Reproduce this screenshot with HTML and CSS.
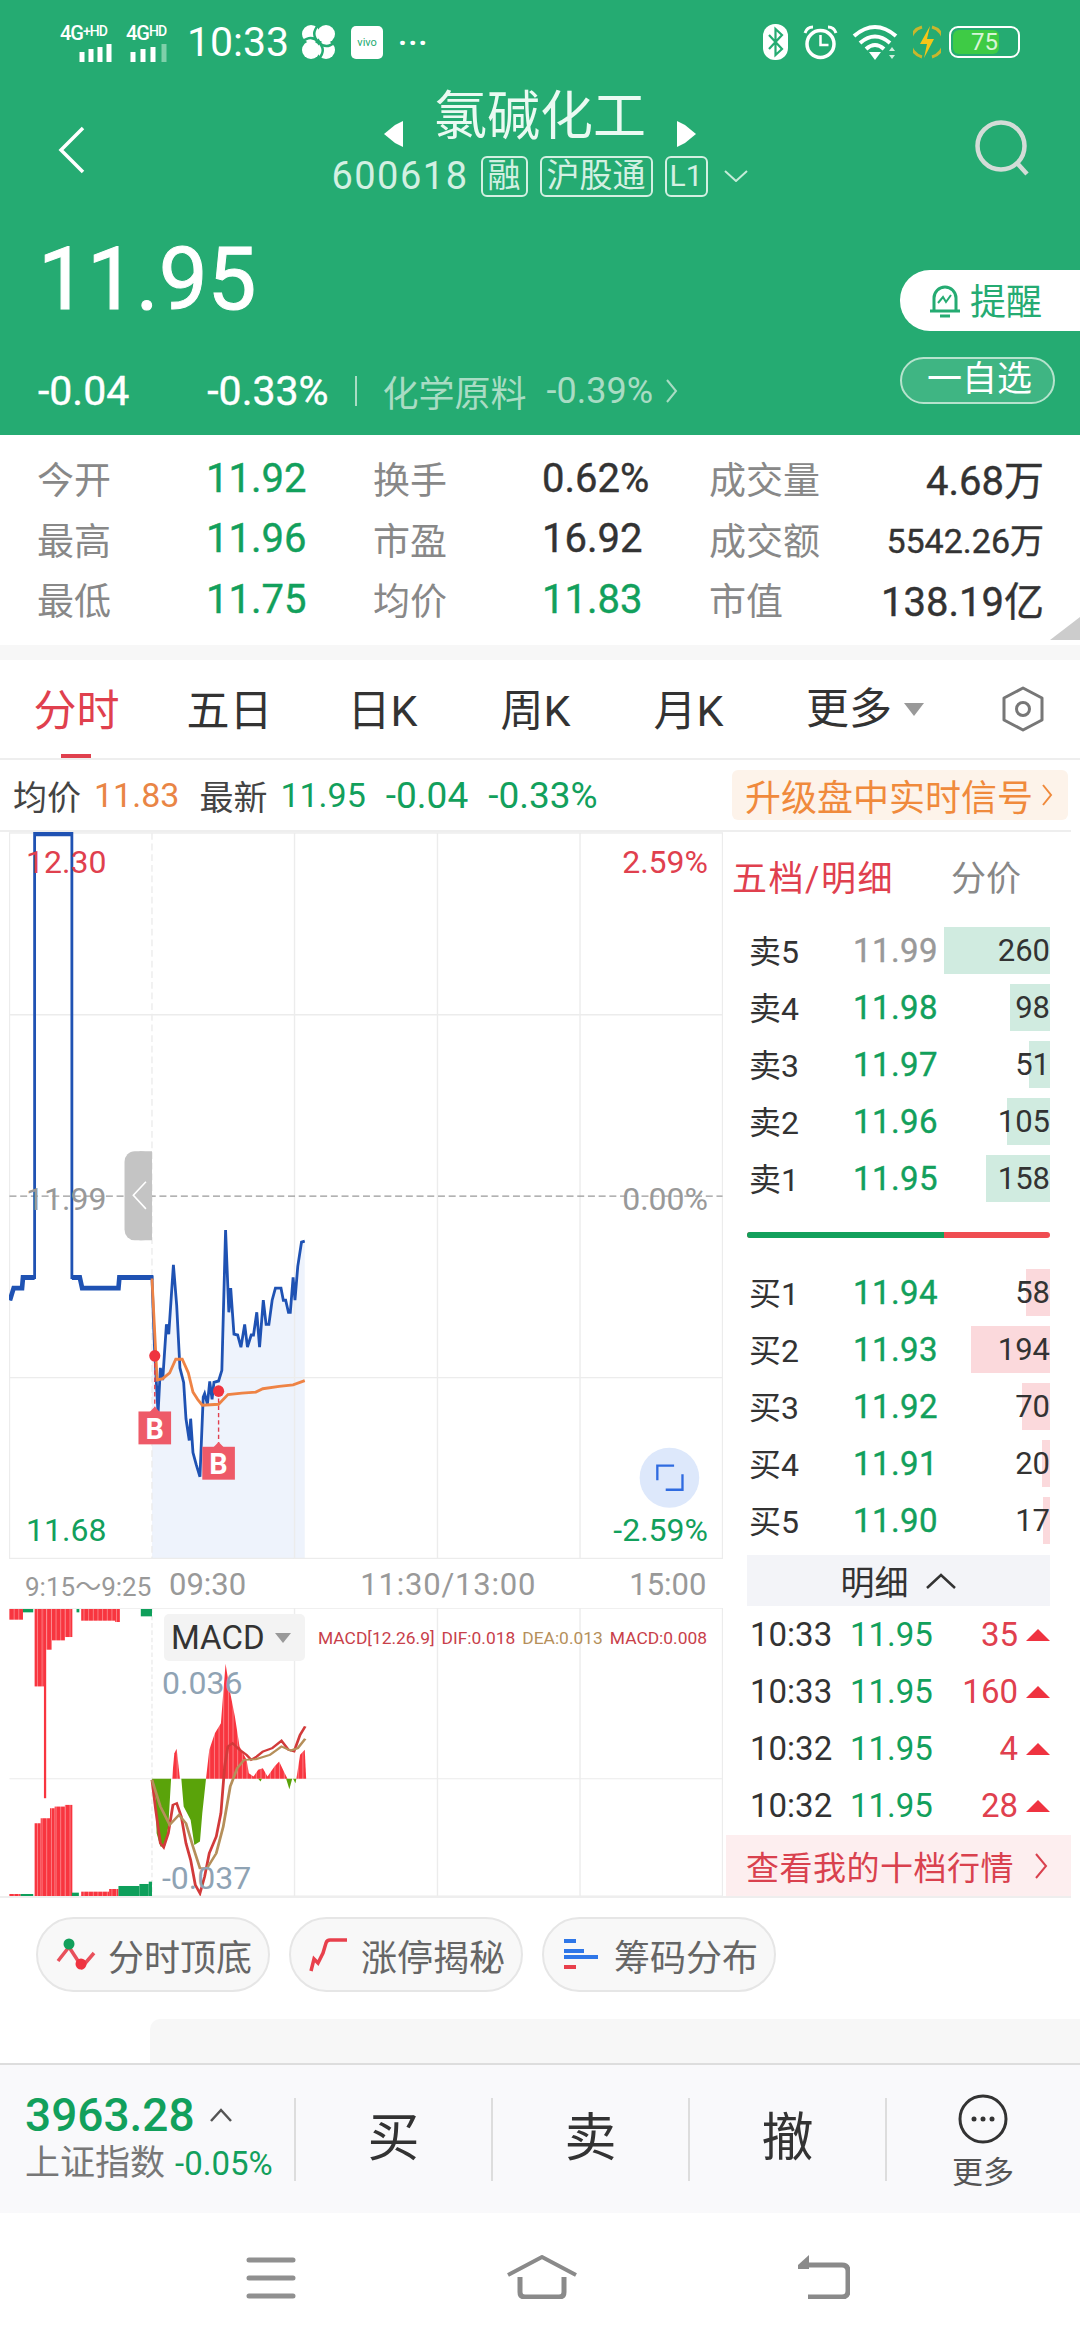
FILE: index.html
```html
<!DOCTYPE html>
<html lang="zh-CN">
<head>
    <meta charset="UTF-8">
    <meta name="viewport" content="width=device-width, initial-scale=1.0">
    <title>氯碱化工 600618</title>
    <link rel="stylesheet" href="styles.css">
</head>
<body>
    <div class="header">
        <div class="statusbar">
            <div class="net"><span>4G<sup>+</sup><sup>HD</sup></span>
                <svg width="42" height="18" viewBox="0 0 42 18"><path d="M9 8v10M18 5v13M27 3v15M36 0v18" stroke="#fff" stroke-width="5"/></svg>
            </div>
            <div class="net net2"><span>4G<sup>HD</sup></span>
                <svg width="44" height="18" viewBox="0 0 44 18"><path d="M5 8v10M15 5v13M25 3v15" stroke="#fff" stroke-width="5"/><path d="M36 0v18" stroke="#7fd0aa" stroke-width="5"/></svg>
            </div>
            <span class="clock">10:33</span>
            <svg class="fan" width="33" height="34" viewBox="0 0 33 34"><circle cx="9" cy="9" r="9" fill="#fff"/><circle cx="24" cy="9" r="9" fill="#fff"/><circle cx="9" cy="25" r="9" fill="#fff"/><circle cx="24" cy="25" r="9" fill="#fff"/><path d="M0 17Q9 9 16.500 17T33 17M16.500 0Q8 9 16.500 17T16.500 34" stroke="#25ab72" stroke-width="2.500" fill="none"/></svg>
            <span class="vivo">vivo</span>
            <span class="dots">···</span>
            <div class="status-right">
                <svg width="25" height="36" viewBox="0 0 25 36"><rect width="25" height="36" rx="12" fill="#fff"/><path d="M6 11l13 14-6.500 6V5l6.500 6L6 25" stroke="#25ab72" stroke-width="2.200" fill="none"/></svg>
                <svg class="ic-alarm" width="35" height="35" viewBox="0 0 35 35"><circle cx="17.500" cy="19" r="13.500" stroke="#fff" stroke-width="3.500" fill="none"/><path d="M17.500 10v10h8" stroke="#fff" stroke-width="2.500" fill="none"/><path d="M2 8Q4 2 10 2M33 8Q31 2 25 2" stroke="#fff" stroke-width="3" fill="none"/></svg>
                <svg class="ic-wifi" width="46" height="36" viewBox="0 0 46 36"><path d="M2 12Q23-6 44 12M8 19Q23 6 38 19M14 25Q23 17 32 25" stroke="#fff" stroke-width="4" fill="none"/><path d="M17 28h12l-6 8z" fill="#fff"/><path d="M40 23l3 4h-6zM40 35l3-4h-6z" fill="#cfeede"/></svg>
                <svg class="ic-bolt" width="28" height="36" viewBox="0 0 28 36"><path d="M9 3A15.500 15.500 0 0 0 9 33M19 3a15.500 15.500 0 0 1 0 30" stroke="#c9b62c" stroke-width="3" fill="none"/><path d="M17 2L7 20h7l-3 14 10-19h-7z" fill="#f5c518"/></svg>
                <div class="battery"><div class="battery-fill" style="width:73%"></div><span>75</span></div>
            </div>
        </div>

        <div class="nav">
            <svg class="back" width="27" height="48" viewBox="0 0 27 48"><path d="M25 2L3 24l22 22" stroke="#fff" stroke-width="3.500" fill="none"/></svg>
            <div class="nav-center">
                <div class="title-row">
                    <svg class="arrow" width="19" height="26" viewBox="0 0 19 26"><path d="M19 0v26L11 22 0 13 11 4z" fill="#fff"/></svg>
                    <span class="title">氯碱化工</span>
                    <svg class="arrow" width="19" height="26" viewBox="0 0 19 26"><path d="M0 0v26l8-4 11-9L8 4z" fill="#fff"/></svg>
                </div>
                <div class="sub-row">
                    <span class="code">600618</span>
                    <span class="tag">融</span>
                    <span class="tag">沪股通</span>
                    <span class="tag tag-l1">L1</span>
                    <svg width="26" height="12" viewBox="0 0 26 12"><path d="M2 1l11 10L24 1" stroke="#c5ecd9" stroke-width="2" fill="none"/></svg>
                </div>
            </div>
            <svg class="search" width="56" height="56" viewBox="0 0 56 56"><circle cx="26" cy="26" r="23.500" stroke="#d3dcd7" stroke-width="4.500" fill="none"/><path d="M42 43l10 11" stroke="#d3dcd7" stroke-width="4.500"/></svg>
        </div>

        <div class="price-row">
            <div class="price-left">
                <div class="price">11.95</div>
                <div class="change-row">
                    <span class="chg chg-a">-0.04</span>
                    <span class="chg">-0.33%</span>
                    <span class="vsep"></span>
                    <span class="sector">化学原料</span>
                    <span class="sector sector-pct">-0.39%</span>
                    <svg width="13" height="26" viewBox="0 0 13 26"><path d="M2 2l9 11-9 11" stroke="#a9dcc4" stroke-width="2" fill="none"/></svg>
                </div>
            </div>
            <div class="price-right">
                <div class="remind">
                    <svg width="34" height="36" viewBox="0 0 34 36"><path d="M6 28V15a11 11 0 0 1 22 0v13M2 28h30M12 33h10" stroke="#25ab72" stroke-width="3" fill="none"/><path d="M10 20l5-6 3 5 5-7" stroke="#25ab72" stroke-width="2" fill="none"/></svg>
                    <span>提醒</span>
                </div>
                <div class="watch">一自选</div>
            </div>
        </div>
    </div>

    <div class="stats">
        <span class="k">今开</span><span class="v green">11.92</span><span class="k">换手</span><span class="v">0.62%</span><span class="k">成交量</span><span class="v end">4.68万</span>
        <span class="k">最高</span><span class="v green">11.96</span><span class="k">市盈</span><span class="v">16.92</span><span class="k">成交额</span><span class="v end small">5542.26万</span>
        <span class="k">最低</span><span class="v green">11.75</span><span class="k">均价</span><span class="v green">11.83</span><span class="k">市值</span><span class="v end">138.19亿</span>
        <div class="corner"></div>
    </div>
    <div class="gap"></div>

    <div class="tabs">
        <div class="tab active">分时</div>
        <div class="tab">五日</div>
        <div class="tab">日K</div>
        <div class="tab">周K</div>
        <div class="tab">月K</div>
        <div class="tab tab-more">更多<i class="tri"></i></div>
        <svg class="hex" width="42" height="46" viewBox="0 0 42 46"><path d="M21 2l19 10v22L21 44 2 34V12z" stroke="#777" stroke-width="3" fill="none" stroke-linejoin="round"/><circle cx="21" cy="23" r="6.500" stroke="#777" stroke-width="3" fill="none"/></svg>
    </div>

    <div class="info">
        <span>均价</span><span class="orange n1">11.83</span>
        <span class="n2">最新</span><span class="green n1">11.95</span>
        <span class="green n3">-0.04</span><span class="green n3">-0.33%</span>
        <div class="signal">升级盘中实时信号<svg width="12" height="24" viewBox="0 0 12 24"><path d="M2 2l8 10-8 10" stroke="#f08a3c" stroke-width="2" fill="none"/></svg></div>
    </div>

    <div class="quote">
        <div class="chart-col">
            <div class="chart">
                <svg class="chart-svg" viewBox="20 22 1533 1503" preserveAspectRatio="none">
                    <polygon fill="#eef3fc" points="327,1100 332,1080 340,1225 345,1130 350,1155 358,1040 363,1060 373,917 380,1000 387,1130 395,1160 400,1235 407,1280 410,1235 415,1305 422,1330 430,1355 437,1190 440,1183 446,1205 451,1158 456,1195 460,1160 470,1157 477,1135 485,845 492,1015 496,965 503,1060 511,1062 518,1087 526,1040 532,1087 540,1062 545,1062 552,1015 558,1087 566,990 572,1040 578,1040 585,990 592,965 604,965 609,990 614,990 620,1015 624,1015 630,943 634,990 640,920 648,870 655,868 655,1525 327,1525"/>
                    <g stroke="#ececec" stroke-width="3" fill="none">
                        <rect x="21" y="24" width="1531" height="1500"/>
                        <path d="M633 24v1500M940 24v1500M1246 24v1500M21 400h1531M21 1150h1531"/>
                        <path d="M327 24v1500" stroke-dasharray="14 8"/>
                    </g>
                    <path d="M21 775h1531" stroke="#999" stroke-width="2.500" stroke-dasharray="15 8" fill="none"/>
                    <rect x="268" y="682" width="59" height="184" rx="22" fill="#c4c4c4"/>
                    <rect x="300" y="682" width="27" height="184" fill="#c4c4c4"/>
                    <path d="M314 745l-27 28 27 28" stroke="#fff" stroke-width="3.500" fill="none"/>
                    <polyline fill="none" stroke="#1f52b3" stroke-width="6" points="22,990 30,965 48,965 50,943 75,943 75,25 155,25 155,943 172,943 177,965 255,965 257,943 327,943 332,1080 340,1225 345,1130 350,1155 358,1040 363,1060 373,917 380,1000 387,1130 395,1160 400,1235 407,1280 410,1235 415,1305 422,1330 430,1355 437,1190 440,1183 446,1205 451,1158 456,1195 460,1160 470,1157 477,1135 485,845 492,1015 496,965 503,1060 511,1062 518,1087 526,1040 532,1087 540,1062 545,1062 552,1015 558,1087 566,990 572,1040 578,1040 585,990 592,965 604,965 609,990 614,990 620,1015 624,1015 630,943 634,990 640,920 648,870 655,868"/>
                    <path d="M22 990L30 965H48L50 943H75M75 26H155M155 943H172L177 965H255L257 943H330" stroke="#1f52b3" stroke-width="10" fill="none"/>
                    <polyline fill="none" stroke="#ee8345" stroke-width="6" points="327,945 333,1060 338,1155 350,1152 365,1140 378,1112 392,1112 405,1140 415,1180 425,1195 435,1207 470,1205 490,1185 520,1182 550,1180 565,1173 600,1168 630,1165 655,1156"/>
                    <path d="M333 1105v115M470 1178v115" stroke="#e0404e" stroke-width="3" stroke-dasharray="9 6" fill="none"/>
                    <circle cx="333" cy="1105" r="12" fill="#ef3340"/>
                    <circle cx="470" cy="1178" r="12" fill="#ef3340"/>
                    <rect x="298" y="1220" width="70" height="68" fill="#ee5a68"/>
                    <rect x="435" y="1293" width="70" height="68" fill="#ee5a68"/>
                    <path d="M322 1221l11-11 11 11zM459 1294l11-11 11 11z" fill="#ee5a68"/>
                    <text x="333" y="1276" class="b-mark">B</text>
                    <text x="470" y="1349" class="b-mark">B</text>
                    <ellipse cx="1438" cy="1357" rx="64" ry="62" fill="#dde8fb"/>
                    <path d="M1412 1362v-30h36M1466 1350v32h-36" stroke="#2f6be0" stroke-width="5" fill="none"/>
                </svg>
                <span class="lbl l-left l-top red">12.30</span>
                <span class="lbl l-right l-top red">2.59%</span>
                <span class="lbl l-left l-mid gray">11.99</span>
                <span class="lbl l-right l-mid gray">0.00%</span>
                <span class="lbl l-left l-bot green">11.68</span>
                <span class="lbl l-right l-bot green">-2.59%</span>
            </div>
            <div class="axis">
                <span class="ax-pre">9:15～9:25</span>
                <span class="ax-open">09:30</span>
                <span class="ax-mid">11:30/13:00</span>
                <span class="ax-close">15:00</span>
            </div>
            <div class="macd">
                <svg class="macd-svg" viewBox="20 145 1533 863" preserveAspectRatio="none">
                    <defs>
                        <pattern id="ribs" width="10" height="10" patternUnits="userSpaceOnUse">
                            <rect width="10" height="10" fill="#f8353f"/>
                            <rect width="1.500" height="10" fill="#fff" opacity="0.5"/>
                        </pattern>
                    </defs>
                    <g stroke="#ececec" stroke-width="3" fill="none">
                        <path d="M21 146h1531V1008H21M633 146v862M940 146v862M1246 146v862M21 657h1531"/>
                        <path d="M327 146v862" stroke-dasharray="14 8"/>
                    </g>
                    <g fill="url(#ribs)">
                        <rect x="20" y="148" width="30" height="32"/>
                        <rect x="75" y="148" width="20" height="232"/>
                        <rect x="95" y="148" width="5" height="567"/>
                        <rect x="100" y="148" width="12" height="122"/>
                        <rect x="112" y="148" width="28" height="94"/>
                        <rect x="140" y="148" width="16" height="84"/>
                        <rect x="175" y="148" width="75" height="35"/>
                        <rect x="248" y="148" width="10" height="39"/>
                        <rect x="20" y="1002" width="25" height="6"/>
                        <rect x="75" y="790" width="13" height="218"/>
                        <rect x="88" y="775" width="20" height="233"/>
                        <rect x="108" y="745" width="10" height="263"/>
                        <rect x="118" y="740" width="22" height="268"/>
                        <rect x="140" y="735" width="16" height="273"/>
                        <rect x="175" y="995" width="60" height="13"/>
                        <rect x="235" y="987" width="20" height="21"/>
                        <polygon points="370,657 375,580 380,567 387,657"/>
                        <polygon points="443,657 450,570 462,520 475,490 480,400 485,312 495,400 505,470 515,560 530,600 535,640 545,650 555,630 565,625 575,650 590,620 600,605 612,640 618,657"/>
                        <polygon points="637,657 645,585 655,570 658,657"/>
                    </g>
                    <g fill="#0e9f5b">
                        <rect x="50" y="148" width="22" height="10"/>
                        <rect x="165" y="148" width="6" height="10"/>
                        <rect x="303" y="148" width="24" height="22"/>
                        <rect x="45" y="1002" width="27" height="6"/>
                        <rect x="155" y="998" width="15" height="10"/>
                        <rect x="255" y="978" width="45" height="30"/>
                        <rect x="300" y="972" width="20" height="36"/>
                        <rect x="320" y="965" width="7" height="43"/>
                    </g>
                    <g fill="#5aa30a">
                        <polygon points="327,657 335,720 337,820 345,860 355,860 362,800 368,657"/>
                        <polygon points="390,657 395,740 410,780 418,855 430,845 435,760 443,657"/>
                        <polygon points="555,657 560,665 563,657"/>
                        <polygon points="615,657 622,688 628,657 630,657 635,670 637,657"/>
                    </g>
                    <polyline fill="none" stroke="#d23a3a" stroke-width="6" points="327,660 335,750 345,850 352,862 362,820 372,735 380,730 390,770 400,850 410,900 420,975 430,1000 440,950 450,880 465,830 475,760 483,620 490,560 500,550 515,570 530,585 540,600 552,590 565,575 585,565 605,543 620,570 632,575 645,525 656,500"/>
                    <polyline fill="none" stroke="#b58f5a" stroke-width="6" points="327,660 345,740 365,795 385,765 400,790 415,860 430,925 445,925 465,880 480,800 495,680 510,625 525,600 550,598 580,585 605,560 625,572 640,565 656,537"/>
                </svg>
                <div class="macd-tag">MACD<i class="tri tri-sm"></i></div>
                <div class="macd-legend">
                    <span class="c-red">MACD[12.26.9]</span>
                    <span class="c-red">DIF:0.018</span>
                    <span class="c-tan">DEA:0.013</span>
                    <span class="c-red">MACD:0.008</span>
                </div>
                <span class="macd-val mv-top">0.036</span>
                <span class="macd-val mv-bot">-0.037</span>
            </div>
        </div>

        <div class="side">
            <div class="side-head">
                <span class="side-tab">五档/明细</span>
                <span class="side-tab2">分价</span>
            </div>
            <div class="book">
                <div class="row"><i class="bar sell" style="width:106px"></i><span class="lab">卖5</span><span class="px gray">11.99</span><span class="qty">260</span></div>
                <div class="row"><i class="bar sell" style="width:40px"></i><span class="lab">卖4</span><span class="px green">11.98</span><span class="qty">98</span></div>
                <div class="row"><i class="bar sell" style="width:21px"></i><span class="lab">卖3</span><span class="px green">11.97</span><span class="qty">51</span></div>
                <div class="row"><i class="bar sell" style="width:43px"></i><span class="lab">卖2</span><span class="px green">11.96</span><span class="qty">105</span></div>
                <div class="row"><i class="bar sell" style="width:64px"></i><span class="lab">卖1</span><span class="px green">11.95</span><span class="qty">158</span></div>
            </div>
            <div class="split"><div class="split-sell" style="width:197px"></div></div>
            <div class="book">
                <div class="row"><i class="bar buy" style="width:24px"></i><span class="lab">买1</span><span class="px green">11.94</span><span class="qty">58</span></div>
                <div class="row"><i class="bar buy" style="width:79px"></i><span class="lab">买2</span><span class="px green">11.93</span><span class="qty">194</span></div>
                <div class="row"><i class="bar buy" style="width:28px"></i><span class="lab">买3</span><span class="px green">11.92</span><span class="qty">70</span></div>
                <div class="row"><i class="bar buy" style="width:8px"></i><span class="lab">买4</span><span class="px green">11.91</span><span class="qty">20</span></div>
                <div class="row"><i class="bar buy" style="width:7px"></i><span class="lab">买5</span><span class="px green">11.90</span><span class="qty">17</span></div>
            </div>
            <div class="detail-head">明细<svg width="32" height="18" viewBox="0 0 32 18"><path d="M2 16L16 3l14 13" stroke="#333" stroke-width="2.500" fill="none"/></svg></div>
            <div class="tick"><span class="t-time">10:33</span><span class="t-px">11.95</span><span class="t-qty">35</span><i class="up"></i></div>
            <div class="tick"><span class="t-time">10:33</span><span class="t-px">11.95</span><span class="t-qty">160</span><i class="up"></i></div>
            <div class="tick"><span class="t-time">10:32</span><span class="t-px">11.95</span><span class="t-qty">4</span><i class="up"></i></div>
            <div class="tick"><span class="t-time">10:32</span><span class="t-px">11.95</span><span class="t-qty">28</span><i class="up"></i></div>
            <div class="ten">查看我的十档行情<svg width="14" height="28" viewBox="0 0 14 28"><path d="M2 2l10 12L2 26" stroke="#d9414e" stroke-width="2" fill="none"/></svg></div>
        </div>
    </div>

    <div class="chips">
        <div class="chip">
            <svg width="40" height="36" viewBox="0 0 40 36"><path d="M2 24L13 10l13 20 12-14" stroke="#e8505b" stroke-width="3.500" fill="none"/><circle cx="13" cy="7" r="5.500" fill="#12a05c"/><circle cx="25" cy="27" r="5.500" fill="#ef3340"/></svg>
            <span>分时顶底</span>
        </div>
        <div class="chip">
            <svg width="40" height="36" viewBox="0 0 40 36"><path d="M2 34l3-12 4 4 5-10 3-10q1-3 4-3h17" stroke="#e8404c" stroke-width="3.500" fill="none"/></svg>
            <span>涨停揭秘</span>
        </div>
        <div class="chip">
            <svg width="40" height="36" viewBox="0 0 40 36"><path d="M2 4h12M2 14h20" stroke="#2f77e8" stroke-width="4"/><path d="M2 20h34" stroke="#2f77e8" stroke-width="4"/><path d="M2 30h12" stroke="#e8404c" stroke-width="4"/></svg>
            <span>筹码分布</span>
        </div>
    </div>

    <div class="panel"></div>

    <div class="trade">
        <div class="index">
            <div class="index-top"><span class="index-val">3963.28</span><svg width="24" height="14" viewBox="0 0 24 14"><path d="M2 13L12 2l10 11" stroke="#555" stroke-width="2.500" fill="none"/></svg></div>
            <div class="index-sub"><span>上证指数</span><span class="index-pct">-0.05%</span></div>
        </div>
        <div class="act">买</div>
        <div class="act">卖</div>
        <div class="act">撤</div>
        <div class="act act-more">
            <svg width="50" height="50" viewBox="0 0 50 50"><circle cx="25" cy="25" r="23" stroke="#333" stroke-width="3" fill="none"/><circle cx="16" cy="25" r="2.500" fill="#333"/><circle cx="25" cy="25" r="2.500" fill="#333"/><circle cx="34" cy="25" r="2.500" fill="#333"/></svg>
            <span>更多</span>
        </div>
    </div>

    <div class="sysnav">
        <svg class="nav-menu" width="50" height="44" viewBox="0 0 50 44"><path d="M3 5h44M3 23h44M3 41h44" stroke="#909090" stroke-width="5" stroke-linecap="round"/></svg>
        <svg class="nav-home" width="72" height="44" viewBox="0 0 72 44"><path d="M2 20L36 2l34 18" stroke="#8a8a8a" stroke-width="4" fill="none" stroke-linejoin="round"/><path d="M14 22v15q0 5 5 5h34q5 0 5-5V22" stroke="#8a8a8a" stroke-width="5" fill="none"/></svg>
        <svg class="nav-back" width="52" height="44" viewBox="0 0 52 44"><path d="M10 10h34q6 0 6 6v20q0 6-6 6H10" stroke="#8a8a8a" stroke-width="5" fill="none"/><path d="M0 10L11 0v14H0z" fill="#8a8a8a"/></svg>
    </div>
</body>
</html>
```

FILE: styles.css
```css
* {
    box-sizing: border-box;
}
body {
    margin: 0;
    width: 1080px;
    height: 2340px;
    overflow: hidden;
    background: #fff;
    color: #333;
    font-family: Roboto, "Noto Sans CJK SC", sans-serif;
}
svg {
    display: block;
    flex-shrink: 0;
}
.green { color: #12a05c; }
.red { color: #e0404e; }
.gray { color: #999; }
.orange { color: #e98545; }

/* header */
.header {
    height: 435px;
    background: #25ab72;
    color: #fff;
}
.statusbar {
    height: 84px;
    padding: 0 60px;
    display: flex;
    align-items: center;
}
.net {
    width: 55px;
    margin-top: 2px;
    display: flex;
    flex-direction: column;
    align-items: flex-end;
    gap: 2px;
}
.net span {
    width: 100%;
    font-size: 20px;
    font-weight: 500;
    line-height: 18px;
    letter-spacing: -1px;
    white-space: nowrap;
}
.net sup {
    font-size: 14px;
    line-height: 0;
    vertical-align: 4px;
}
.net2 {
    width: 46px;
    margin-left: 11px;
}
.clock {
    margin-left: 15px;
    font-size: 41px;
}
.fan {
    margin-left: 13px;
}
.vivo {
    width: 32px;
    height: 33px;
    margin-left: 16px;
    background: #fff;
    border-radius: 5px;
    color: #25ab72;
    font-size: 11px;
    line-height: 33px;
    text-align: center;
}
.dots {
    margin-left: 15px;
    font-size: 30px;
    font-weight: 700;
    letter-spacing: 1px;
}
.status-right {
    margin-left: auto;
    display: flex;
    align-items: center;
}
.ic-alarm { margin-left: 15px; }
.ic-wifi { margin-left: 14px; }
.ic-bolt { margin-left: 15px; }
.battery {
    position: relative;
    width: 71px;
    height: 32px;
    margin-left: 8px;
    padding: 2px;
    border: 2px solid #fff;
    border-radius: 9px;
}
.battery-fill {
    height: 100%;
    background: #3ecb45;
    border-radius: 6px;
}
.battery span {
    position: absolute;
    left: 0;
    right: 0;
    top: 0;
    font-size: 24px;
    line-height: 28px;
    text-align: center;
    color: #d8f5d8;
}
.nav {
    height: 118px;
    display: flex;
    align-items: flex-start;
}
.back {
    margin: 42px 0 0 58px;
}
.nav-center {
    flex: 1;
    padding-left: 20px;
}
.title-row {
    height: 62px;
    padding-top: 4px;
    display: flex;
    align-items: center;
    justify-content: center;
    gap: 31px;
}
.title {
    font-size: 53px;
    line-height: 62px;
    color: #eafaf2;
}
.arrow {
    margin-top: 34px;
}
.sub-row {
    height: 52px;
    margin-top: 4px;
    display: flex;
    align-items: center;
    justify-content: center;
    color: #d3f0e2;
}
.code {
    font-size: 38px;
    letter-spacing: 1.500px;
    margin-right: 12px;
}
.tag {
    height: 41px;
    padding: 0 5px;
    margin-right: 12px;
    border: 2px solid #d3f0e2;
    border-radius: 6px;
    font-size: 33px;
    line-height: 36px;
}
.tag-l1 {
    padding: 0 3px;
    margin-right: 15px;
    font-size: 30px;
}
.search {
    margin: 36px 49px 0 0;
}
.price-row {
    height: 233px;
    display: flex;
    justify-content: space-between;
}
.price-left {
    padding-left: 38px;
}
.price {
    height: 100px;
    margin-top: 27px;
    font-size: 87px;
    line-height: 100px;
    -webkit-text-stroke: 1px #fff;
}
.change-row {
    height: 50px;
    margin-top: 37px;
    display: flex;
    align-items: center;
}
.chg {
    font-size: 41px;
    -webkit-text-stroke: 0.400px #fff;
}
.chg-a {
    margin-right: 78px;
}
.vsep {
    width: 2px;
    height: 30px;
    margin: 0 26px;
    background: #a9dcc4;
}
.sector {
    font-size: 36px;
    color: #a9dcc4;
}
.sector-pct {
    margin: 0 12px 0 20px;
}
.price-right {
    width: 180px;
    padding-top: 68px;
}
.remind {
    height: 61px;
    padding: 0 0 4px 28px;
    display: flex;
    align-items: center;
    gap: 8px;
    background: #fff;
    border-radius: 30px 0 0 30px;
    color: #25ab72;
    font-size: 36px;
}
.remind svg {
    margin-top: 4px;
}
.watch {
    width: 155px;
    height: 47px;
    margin-top: 26px;
    padding-left: 4px;
    border: 2px solid #b6e3cd;
    border-radius: 24px;
    background: rgba(255,255,255,0.12);
    font-size: 35px;
    line-height: 42px;
    text-align: center;
}

/* stats */
.stats {
    position: relative;
    height: 210px;
    padding: 13px 36px 0 37px;
    display: grid;
    grid-template-columns: 169px 167px 169px 167px 130px 1fr;
    grid-auto-rows: 60.5px;
    align-items: center;
}
.k {
    font-size: 37px;
    color: #888;
}
.v {
    font-size: 40px;
    white-space: nowrap;
    -webkit-text-stroke: 0.400px currentColor;
}
.end {
    text-align: right;
}
.v.small {
    font-size: 34px;
}
.corner {
    position: absolute;
    right: 0;
    bottom: 5px;
    width: 0;
    height: 0;
    border-left: 30px solid transparent;
    border-bottom: 23px solid #ccc;
}
.gap {
    height: 15px;
    background: #f7f7f7;
}

/* tabs */
.tabs {
    height: 100px;
    display: flex;
    align-items: center;
    border-bottom: 2px solid #eee;
}
.tab {
    position: relative;
    width: 153px;
    text-align: center;
    font-size: 43px;
    line-height: 102px;
    height: 98px;
}
.tab-more {
    width: 190px;
    padding-left: 10px;
    display: flex;
    align-items: center;
    justify-content: center;
    gap: 12px;
}
.tab.active {
    color: #e0404e;
}
.tab.active::after {
    content: "";
    position: absolute;
    left: 61px;
    bottom: 0;
    width: 30px;
    height: 4px;
    background: #e0404e;
}
.tri {
    width: 0;
    height: 0;
    border-left: 10px solid transparent;
    border-right: 10px solid transparent;
    border-top: 13px solid #999;
}
.hex {
    margin-left: auto;
    margin-right: 36px;
}

/* info line */
.info {
    height: 70px;
    padding: 0 12px 0 13px;
    display: flex;
    align-items: center;
    color: #444;
    font-size: 34px;
}
.n1 {
    margin-left: 13px;
}
.n2 {
    margin-left: 20px;
}
.n3 {
    margin-left: 20px;
    font-size: 37px;
}
.signal {
    margin-left: auto;
    height: 50px;
    width: 336px;
    padding-left: 13px;
    display: flex;
    align-items: center;
    gap: 8px;
    background: #fdf3ea;
    border-radius: 6px;
    color: #f08a3c;
    font-size: 36px;
}

/* chart */
.quote {
    width: 1071px;
    height: 1068px;
    display: flex;
    border-top: 2px solid #eee;
    border-bottom: 2px solid #eee;
}
.chart-col {
    width: 723px;
    padding-left: 9px;
}
.chart {
    position: relative;
    height: 727px;
}
.chart-svg {
    width: 714px;
    height: 727px;
}
.b-mark {
    font-family: Roboto, sans-serif;
    font-size: 62px;
    font-weight: 700;
    fill: #fff;
    text-anchor: middle;
}
.lbl {
    position: absolute;
    font-size: 32px;
    line-height: 36px;
}
.l-left { left: 17px; }
.l-right { right: 15px; }
.l-top { top: 12px; }
.l-mid { top: 349px; }
.l-bot { top: 680px; }
.axis {
    height: 49px;
    padding-top: 2px;
    display: flex;
    align-items: center;
    color: #999;
    font-size: 31px;
    white-space: nowrap;
}
.ax-pre {
    width: 143px;
    padding-left: 16px;
    font-size: 26px;
}
.ax-open {
    margin-left: 17px;
}
.ax-mid {
    margin-left: 114px;
    letter-spacing: 0.800px;
}
.ax-close {
    margin-left: 93px;
}
.macd {
    position: relative;
    height: 288px;
}
.macd-svg {
    width: 714px;
    height: 288px;
}
.macd-tag {
    position: absolute;
    left: 155px;
    top: 6px;
    width: 141px;
    height: 47px;
    padding-left: 7px;
    display: flex;
    align-items: center;
    gap: 10px;
    background: #f3f3f3;
    border-radius: 5px;
    font-size: 33px;
}
.tri-sm {
    border-left-width: 8px;
    border-right-width: 8px;
    border-top-width: 10px;
}
.macd-legend {
    position: absolute;
    left: 309px;
    top: 17px;
    display: flex;
    gap: 7px;
    font-size: 17.400px;
    line-height: 26px;
    white-space: nowrap;
}
.c-red { color: #c8404a; }
.c-tan { color: #b58f5a; }
.macd-val {
    position: absolute;
    left: 153px;
    color: #8fa3b4;
    font-size: 32px;
    line-height: 36px;
}
.mv-top { top: 57px; }
.mv-bot { top: 252px; }

/* order book */
.side {
    width: 348px;
    padding: 0 21px 0 24px;
}
.side-head {
    height: 87px;
    margin: 0 -21px 8px -15px;
    display: flex;
    align-items: center;
    font-size: 35px;
}
.side-tab {
    color: #e0404e;
    letter-spacing: 1.500px;
}
.side-tab2 {
    margin-left: 57px;
    color: #888;
}
.book {
    display: flex;
    flex-direction: column;
    gap: 10px;
}
.row {
    position: relative;
    height: 47px;
    padding-left: 2px;
    display: flex;
    align-items: center;
    font-size: 32px;
}
.bar {
    position: absolute;
    right: 0;
    top: 0;
    bottom: 0;
}
.sell { background: #d0ebe0; }
.buy { background: #fbd9dc; }
.lab {
    position: relative;
    width: 104px;
    margin-top: -3px;
}
.px {
    position: relative;
    font-size: 33px;
    letter-spacing: 0.400px;
    -webkit-text-stroke: 0.400px currentColor;
}
.qty {
    position: relative;
    margin-left: auto;
    font-size: 31px;
}
.split {
    height: 6px;
    margin: 30px 0 31px;
    background: #ef4d52;
    border-radius: 3px;
    overflow: hidden;
}
.split-sell {
    height: 100%;
    background: #12a05c;
}
.detail-head {
    height: 51px;
    margin-top: 11px;
    display: flex;
    align-items: center;
    justify-content: center;
    gap: 16px;
    background: #f3f4f8;
    font-size: 34px;
}
.tick {
    height: 57px;
    padding-left: 3px;
    display: flex;
    align-items: center;
    font-size: 33px;
}
.t-time {
    width: 100px;
}
.t-px {
    color: #12a05c;
}
.t-qty {
    margin-left: auto;
    color: #e0404e;
}
.up {
    width: 0;
    height: 0;
    margin-left: 8px;
    border-left: 12.500px solid transparent;
    border-right: 12.500px solid transparent;
    border-bottom: 12px solid #ef3340;
}
.ten {
    height: 61px;
    margin: 1px -21px 0 -21px;
    padding: 0 23px 0 20px;
    display: flex;
    align-items: center;
    justify-content: space-between;
    background: #fdeeef;
    color: #d9414e;
    font-size: 33px;
    letter-spacing: 0.500px;
}

/* chips */
.chips {
    margin-top: 19px;
    padding-left: 36px;
    display: flex;
    gap: 19px;
}
.chip {
    width: 234px;
    height: 75px;
    padding-left: 18px;
    display: flex;
    align-items: center;
    gap: 12px;
    background: #f8f8f8;
    border: 2px solid #e6e6e6;
    border-radius: 38px;
    color: #666;
    font-size: 36px;
    white-space: nowrap;
}
.panel {
    height: 44px;
    margin: 27px 0 0 150px;
    background: #f7f7f7;
    border-radius: 10px 0 0 0;
}

/* bottom bar */
.trade {
    height: 150px;
    display: flex;
    align-items: center;
    background: #f9f9fb;
    border-top: 2px solid #ddd;
}
.index {
    width: 294px;
    padding-left: 25px;
}
.index-top {
    display: flex;
    align-items: center;
    gap: 14px;
    height: 46px;
}
.index-val {
    color: #12a05c;
    font-size: 46px;
    font-weight: 500;
}
.index-sub {
    margin-top: 4px;
    display: flex;
    align-items: center;
    color: #777;
    font-size: 35px;
    line-height: 44px;
}
.index-pct {
    margin-left: 10px;
    color: #12a05c;
    font-size: 33px;
}
.act {
    width: 197px;
    height: 83px;
    padding-bottom: 12px;
    display: flex;
    align-items: center;
    justify-content: center;
    border-left: 2px solid #ddd;
    font-size: 52px;
}
.act-more {
    flex-direction: column;
    gap: 3px;
    width: 194px;
    padding: 8px 0 0;
    font-size: 31px;
    color: #555;
}

/* system nav */
.sysnav {
    height: 127px;
    padding-top: 42px;
    display: flex;
    align-items: flex-start;
}
.nav-menu { margin-left: 246px; }
.nav-home { margin-left: 210px; }
.nav-back { margin-left: 220px; }
```
